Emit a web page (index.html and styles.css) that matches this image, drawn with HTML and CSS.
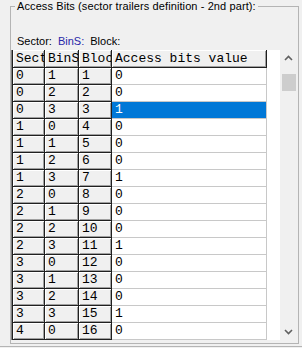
FILE: index.html
```html
<!DOCTYPE html>
<html lang="en">
<head>
  <meta charset="UTF-8">
  <title>Access Bits</title>
  <link rel="stylesheet" href="styles.css">
</head>
<body>

  <!-- Gruppe: Access Bits -->
  <fieldset class="group">
    <legend>Access Bits (sector trailers definition - 2nd part):</legend>

    <div class="labels">
      <span>Sector:</span>
      <span class="bins">BinS:</span>
      <span>Block:</span>
    </div>

    <div class="listbox">
      <table class="grid">
        <colgroup>
          <col class="c1"><col class="c2"><col class="c3"><col class="c4">
        </colgroup>
        <tr class="head">
          <td class="fix first">Sector</td><td class="fix">BinS</td><td class="fix">Block</td><td class="fix">Access bits value</td>
        </tr>
        <tr><td class="fix first">0</td><td class="fix">1</td><td class="fix">1</td><td>0</td></tr>
        <tr><td class="fix first">0</td><td class="fix">2</td><td class="fix">2</td><td>0</td></tr>
        <tr><td class="fix first">0</td><td class="fix">3</td><td class="fix">3</td><td class="sel">1</td></tr>
        <tr><td class="fix first">1</td><td class="fix">0</td><td class="fix">4</td><td>0</td></tr>
        <tr><td class="fix first">1</td><td class="fix">1</td><td class="fix">5</td><td>0</td></tr>
        <tr><td class="fix first">1</td><td class="fix">2</td><td class="fix">6</td><td>0</td></tr>
        <tr><td class="fix first">1</td><td class="fix">3</td><td class="fix">7</td><td>1</td></tr>
        <tr><td class="fix first">2</td><td class="fix">0</td><td class="fix">8</td><td>0</td></tr>
        <tr><td class="fix first">2</td><td class="fix">1</td><td class="fix">9</td><td>0</td></tr>
        <tr><td class="fix first">2</td><td class="fix">2</td><td class="fix">10</td><td>0</td></tr>
        <tr><td class="fix first">2</td><td class="fix">3</td><td class="fix">11</td><td>1</td></tr>
        <tr><td class="fix first">3</td><td class="fix">0</td><td class="fix">12</td><td>0</td></tr>
        <tr><td class="fix first">3</td><td class="fix">1</td><td class="fix">13</td><td>0</td></tr>
        <tr><td class="fix first">3</td><td class="fix">2</td><td class="fix">14</td><td>0</td></tr>
        <tr><td class="fix first">3</td><td class="fix">3</td><td class="fix">15</td><td>1</td></tr>
        <tr><td class="fix first">4</td><td class="fix">0</td><td class="fix">16</td><td>0</td></tr>
      </table>

      <div class="gap"></div>

      <!-- Scrollbar -->
      <div class="scrollbar">
        <div class="arrow">
          <svg width="17" height="17" viewBox="0 0 17 17"><path d="M5 10 L8.5 6.5 L12 10" fill="none" stroke="#606060" stroke-width="1.6"/></svg>
        </div>
        <div class="track"><div class="thumb"></div></div>
        <div class="arrow">
          <svg width="17" height="17" viewBox="0 0 17 17"><path d="M5 7 L8.5 10.5 L12 7" fill="none" stroke="#606060" stroke-width="1.6"/></svg>
        </div>
      </div>
    </div>
  </fieldset>

  <div class="bottom-line"></div>

</body>
</html>
```

FILE: styles.css
```css
/* Grundlayout */
body {
  margin: 0;
  padding: 0;
  background: #f0f0f0;
  font-family: "Liberation Sans", Arial, sans-serif;
  font-size: 11px;
  color: #000;
}

/* Gruppenrahmen */
.group {
  margin: 0 3px 0 10px;
  padding: 0 1px 3px 0;
  min-width: 0;
  border: 1px solid #b4b4b4;
}
.group legend {
  margin-left: 4px;
  padding: 0 2px;
  line-height: 13px;
  letter-spacing: 0.1px;
}

.labels {
  margin-top: 22px;
  padding-left: 6px;
  line-height: 13px;
  height: 13px;
  white-space: nowrap;
}
.labels span {
  margin-right: 3px;
}
.labels .bins {
  color: #2828a8;
}

/* Liste mit Grid */
.listbox {
  margin-top: 2px;
  display: flex;
  height: 290px;
  background: #fff;
  border-left: 1px solid #808080;
}

.grid {
  width: 255px;
  table-layout: fixed;
  border-collapse: separate;
  border-spacing: 0;
  font-family: "Liberation Mono", "Courier New", monospace;
  font-size: 13px;
}
.grid col.c1 { width: 33px; }
.grid col.c2 { width: 34px; }
.grid col.c3 { width: 33px; }
.grid col.c4 { width: 155px; }

.grid td {
  box-sizing: border-box;
  height: 17px;
  padding: 0 0 0 3px;
  line-height: 16px;
  white-space: nowrap;
  overflow: hidden;
  border-right: 1px solid #c8c8c8;
  border-bottom: 1px solid #c8c8c8;
}
.grid tr.head td {
  height: 18px;
}
.grid td.fix {
  background: #f0f0f0;
  border-right: 1px solid #202020;
  border-bottom: 1px solid #202020;
  box-shadow: inset 1px 1px 0 #fff, inset -1px -1px 0 #a0a0a0;
}
.grid td.first {
  border-left: 1px solid #202020;
}
.grid td.sel {
  background: #0078d7;
  color: #fff;
}

.gap {
  flex: 1;
}

/* Scrollbar */
.scrollbar {
  width: 17px;
  display: flex;
  flex-direction: column;
  background: #f0f0f0;
}
.scrollbar .arrow {
  height: 17px;
}
.scrollbar .arrow svg {
  display: block;
}
.scrollbar .track {
  flex: 1;
}
.scrollbar .thumb {
  margin: 7px 1px 0 2px;
  height: 17px;
  background: #cdcdcd;
}

.bottom-line {
  margin-top: 2px;
  border-top: 1px solid #b4b4b4;
}
```
